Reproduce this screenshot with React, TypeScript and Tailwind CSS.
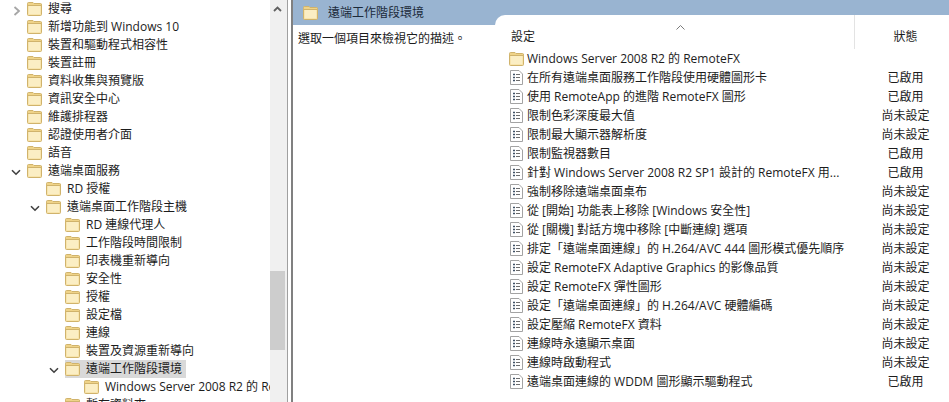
const FONT = "font-['Open_Sans','Noto_Sans_CJK_TC',sans-serif]";

type TreeItem = { label: string; level: number; arrow?: "open" | "closed"; selected?: boolean };

const treeItems: TreeItem[] = [
  { label: "搜尋", level: 0, arrow: "closed" },
  { label: "新增功能到 Windows 10", level: 0 },
  { label: "裝置和驅動程式相容性", level: 0 },
  { label: "裝置註冊", level: 0 },
  { label: "資料收集與預覽版", level: 0 },
  { label: "資訊安全中心", level: 0 },
  { label: "維護排程器", level: 0 },
  { label: "認證使用者介面", level: 0 },
  { label: "語音", level: 0 },
  { label: "遠端桌面服務", level: 0, arrow: "open" },
  { label: "RD 授權", level: 1 },
  { label: "遠端桌面工作階段主機", level: 1, arrow: "open" },
  { label: "RD 連線代理人", level: 2 },
  { label: "工作階段時間限制", level: 2 },
  { label: "印表機重新導向", level: 2 },
  { label: "安全性", level: 2 },
  { label: "授權", level: 2 },
  { label: "設定檔", level: 2 },
  { label: "連線", level: 2 },
  { label: "裝置及資源重新導向", level: 2 },
  { label: "遠端工作階段環境", level: 2, arrow: "open", selected: true },
  { label: "Windows Server 2008 R2 的 RemoteFX", level: 3 },
  { label: "暫存資料夾", level: 2 },
];

const indentClass = ["pl-[27px]", "pl-[46px]", "pl-[65px]", "pl-[84px]"];

const policies: Array<{ name: string; state: string }> = [
  { name: "在所有遠端桌面服務工作階段使用硬體圖形卡", state: "已啟用" },
  { name: "使用 RemoteApp 的進階 RemoteFX 圖形", state: "已啟用" },
  { name: "限制色彩深度最大值", state: "尚未設定" },
  { name: "限制最大顯示器解析度", state: "尚未設定" },
  { name: "限制監視器數目", state: "已啟用" },
  { name: "針對 Windows Server 2008 R2 SP1 設計的 RemoteFX 用...", state: "已啟用" },
  { name: "強制移除遠端桌面桌布", state: "尚未設定" },
  { name: "從 [開始] 功能表上移除 [Windows 安全性]", state: "尚未設定" },
  { name: "從 [關機] 對話方塊中移除 [中斷連線] 選項", state: "尚未設定" },
  { name: "排定「遠端桌面連線」的 H.264/AVC 444 圖形模式優先順序", state: "尚未設定" },
  { name: "設定 RemoteFX Adaptive Graphics 的影像品質", state: "尚未設定" },
  { name: "設定 RemoteFX 彈性圖形", state: "尚未設定" },
  { name: "設定「遠端桌面連線」的 H.264/AVC 硬體編碼", state: "尚未設定" },
  { name: "設定壓縮 RemoteFX 資料", state: "尚未設定" },
  { name: "連線時永遠顯示桌面", state: "尚未設定" },
  { name: "連線時啟動程式", state: "尚未設定" },
  { name: "遠端桌面連線的 WDDM 圖形顯示驅動程式", state: "已啟用" },
];

function FolderIcon() {
  return (
    <svg width="15" height="14" viewBox="0 0 15 14" className="shrink-0">
      <path d="M0.5 2.5 V12.5 a1 1 0 0 0 1 1 H13.5 a1 1 0 0 0 1-1 V2.5 Z" fill="#f6dc96" stroke="#d0b36c" />
      <path d="M1.5 3.5 H13.5 V12.5 H1.5 Z" fill="#fbeec4" />
      <path d="M0.5 2.5 V1.5 a1 1 0 0 1 1-1 H6 l1 1 H13.5 a1 1 0 0 1 1 1 V3.5 H0.5 Z" fill="#efd388" stroke="#d0b36c" />
    </svg>
  );
}

function PolicyIcon() {
  return (
    <svg width="13" height="15" viewBox="0 0 13 15" className="shrink-0">
      <path d="M0.5 0.5 H9 L12.5 4 V14.5 H0.5 Z" fill="#fff" stroke="#a3a3a3" />
      <path d="M3 4.5 H5 M3 7.5 H5 M3 10.5 H5" stroke="#3f5166" strokeWidth="1.4" />
      <path d="M6 4.5 H10 M6 7.5 H10 M6 10.5 H10" stroke="#6d6d6d" />
    </svg>
  );
}

function Arrow({ kind }: { kind: "open" | "closed" }) {
  if (kind === "closed") {
    return (
      <svg width="8" height="10" viewBox="0 0 8 10" className="absolute left-[-14px] top-[6px]">
        <path d="M1.5 1 L6 5 L1.5 9" fill="none" stroke="#a6a6a6" strokeWidth="1.8" />
      </svg>
    );
  }
  return (
    <svg width="10" height="7" viewBox="0 0 10 7" className="absolute left-[-16px] top-[7px]">
      <path d="M1 1.2 L5 5.2 L9 1.2" fill="none" stroke="#404040" strokeWidth="1.6" />
    </svg>
  );
}

function TreeRow({ item }: { item: TreeItem }) {
  return (
    <div className={`flex h-[18px] items-center whitespace-nowrap ${indentClass[item.level]}`}>
      <div className={`relative flex h-[18px] items-center gap-[6px] pr-[4px] ${item.selected ? "bg-[#d9d9d9]" : ""}`}>
        {item.arrow && <Arrow kind={item.arrow} />}
        <FolderIcon />
        <span>{item.label}</span>
      </div>
    </div>
  );
}

export default function App() {
  return (
    <div className={`flex h-[402px] w-[949px] overflow-hidden bg-white text-[12px] leading-[18px] text-[#1c1c1c] ${FONT}`}>
      <div className="w-[270px] shrink-0 overflow-hidden">
        {treeItems.map((item) => (
          <TreeRow key={item.label} item={item} />
        ))}
      </div>

      <div className="flex w-[17px] shrink-0 flex-col bg-[#f0f0f0] pr-[2px]">
        <div className="flex h-[17px] items-center justify-center">
          <svg width="9" height="6" viewBox="0 0 9 6">
            <path d="M1 5 L4.5 1.5 L8 5" fill="none" stroke="#606060" strokeWidth="1.8" />
          </svg>
        </div>
        <div className="mt-[254px] h-[79px] bg-[#cdcdcd]" />
      </div>

      <div className="w-[1px] shrink-0 bg-[#a0a0a0]" />
      <div className="w-[3px] shrink-0 bg-white" />
      <div className="w-[2px] shrink-0 bg-[#808080]" />

      <div className="flex min-w-0 flex-1 bg-[#99b4d1]">
        <div className="flex w-[202px] shrink-0 flex-col">
          <div className="flex h-[25px] shrink-0 items-center pl-[10px]">
            <FolderIcon />
            <span className="ml-[10px] text-[#1b2a3a]">遠端工作階段環境</span>
          </div>
          <div className="flex-1 bg-white pl-[5px] pt-[5px]">選取一個項目來檢視它的描述。</div>
        </div>

        <div className="mt-[15px] flex min-w-0 flex-1 flex-col rounded-tl-[10px] bg-white">
          <div className="flex h-[34px] shrink-0">
            <div className="relative flex w-[360px] shrink-0 items-end border-r border-[#e3e3e3] pb-[3px] pl-[16px]">
              <svg width="9" height="5" viewBox="0 0 9 5" className="absolute left-[181px] top-[10px]">
                <path d="M0.5 4.5 L4.5 0.5 L8.5 4.5" fill="none" stroke="#7a7a7a" />
              </svg>
              <span>設定</span>
            </div>
            <div className="flex flex-1 items-end justify-center pb-[3px] pl-[7px]">狀態</div>
          </div>
          <div className="flex h-[19px] items-center gap-[3px] pl-[14px] whitespace-nowrap">
            <FolderIcon />
            <span>Windows Server 2008 R2 的 RemoteFX</span>
          </div>
          {policies.map((policy) => (
            <div key={policy.name} className="flex h-[19px] items-center whitespace-nowrap">
              <div className="flex w-[360px] shrink-0 items-center gap-[4px] pl-[15px]">
                <PolicyIcon />
                <span>{policy.name}</span>
              </div>
              <div className="flex-1 pl-[7px] text-center">{policy.state}</div>
            </div>
          ))}
        </div>
      </div>
    </div>
  );
}
